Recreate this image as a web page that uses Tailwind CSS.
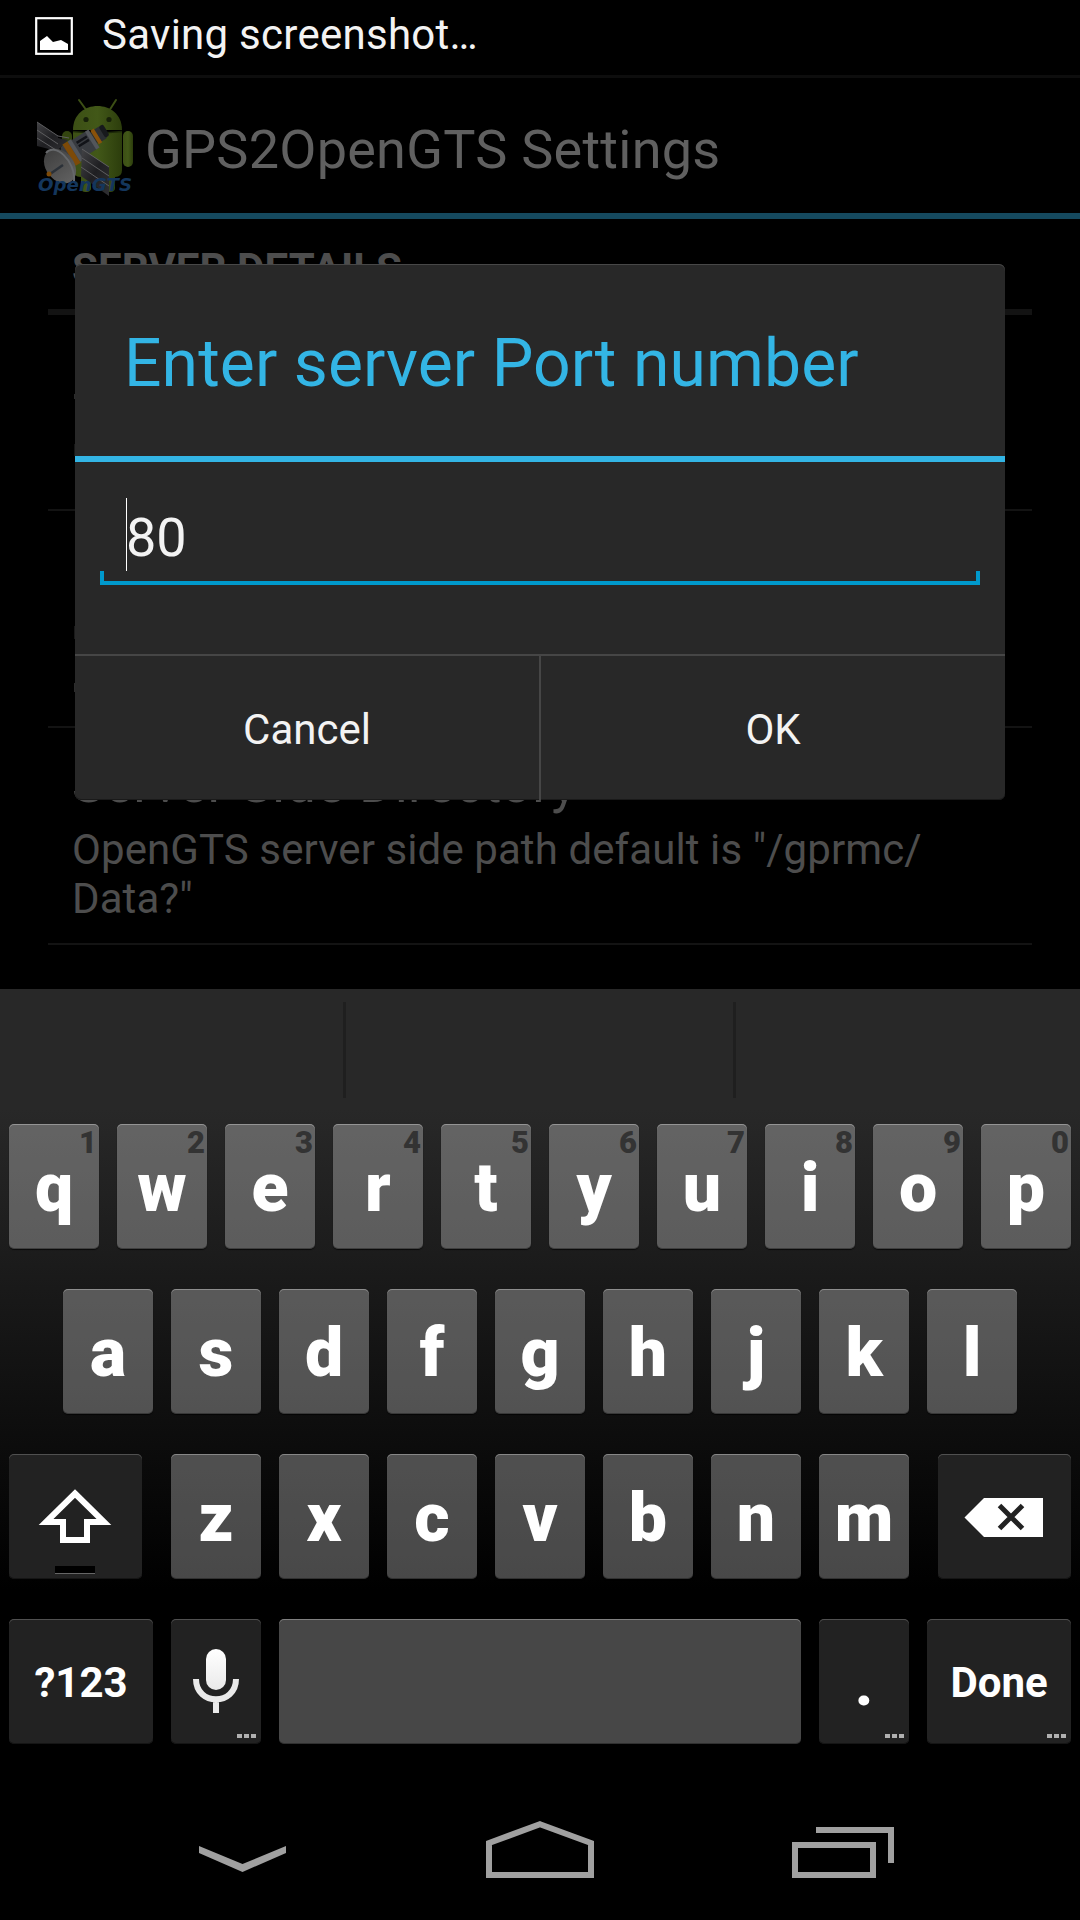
<!DOCTYPE html>
<html lang="en">
<head>
<meta charset="utf-8">
<title>GPS2OpenGTS Settings</title>
<script src="https://cdn.jsdelivr.net/npm/@tailwindcss/browser@4"></script>
</head>
<body class="bg-black">
<div class="relative flex h-[1920px] w-[1080px] flex-col overflow-hidden bg-black font-['Roboto',sans-serif] text-[42px] leading-[49px]">

  <!-- status bar -->
  <header class="flex h-[75px] shrink-0 items-start pl-[35px] text-[#f3f3f3]">
    <svg class="mt-[17px] h-[38px] w-[38px]" viewBox="0 0 38 38"><rect x="1.2" y="1.2" width="35.6" height="35.6" fill="none" stroke="#fff" stroke-width="2.2"/><path d="M5 33V24L12 19L18 25L26 23L33 27V33Z" fill="#fff"/></svg>
    <span class="ml-[29px] mt-[10px] whitespace-nowrap tracking-[0.27px]">Saving screenshot…</span>
  </header>

  <!-- action bar -->
  <div class="flex h-[144px] shrink-0 items-start border-t-[3px] border-b-[6px] border-t-[#0d0d0d] border-b-[#15495e] pl-[36px]">
    <svg class="mt-[20px] h-[98px] w-[98px] shrink-0" viewBox="0 0 98 98">
      <defs>
        <linearGradient id="g" x1="0" x2="1"><stop offset="0" stop-color="#3c4f15"/><stop offset=".5" stop-color="#425818"/><stop offset="1" stop-color="#2c3d0c"/></linearGradient>
        <linearGradient id="d" x1="0" x2="1"><stop offset="0" stop-color="#404040"/><stop offset="1" stop-color="#606060"/></linearGradient>
        <linearGradient id="p" x1="0" x2="1" y2="1"><stop offset="0" stop-color="#434346"/><stop offset=".5" stop-color="#1f1f22"/><stop offset="1" stop-color="#303033"/></linearGradient>
      </defs>
      <path d="M43 2L51 13M80 2L73 13" stroke="#3c4f15" stroke-width="2" stroke-linecap="round"/>
      <path d="M37 32C37 0 86 0 86 32Z" fill="url(#g)"/>
      <path d="M37 34H86V72Q86 79 79 79V90Q79 94 74 94T69 90V79H55V90Q55 94 50 94T45 90V79Q37 79 37 72Z" fill="url(#g)"/>
      <path d="M37 33.500Q61 36 86 33.500" fill="none" stroke="#1d2a08" stroke-width="1.500"/>
      <rect x="87" y="33" width="10" height="36" rx="5" fill="url(#g)"/><rect x="26" y="33" width="10" height="30" rx="5" fill="#33450f"/>
      <circle cx="50" cy="21.500" r="2.600" fill="#172109"/><circle cx="73" cy="21.500" r="2.600" fill="#172109"/>
      <path d="M1 24L22 38V40L32 42L21 53L1 48Z" fill="url(#p)"/>
      <path d="M1 32L22 46M1 40L20 52M1 24L22 38L33 40" stroke="#5e5e60" stroke-width="1" fill="none"/>
      <g transform="rotate(-32 45 48)"><rect x="26" y="38" width="34" height="21" rx="3" fill="#383b40"/><rect x="60" y="41" width="12" height="14" rx="2" fill="#2b2e32"/><rect x="30" y="37" width="6" height="25" fill="#7d4a08"/><rect x="36" y="37" width="4" height="24" fill="#53565b"/><rect x="56" y="38" width="4" height="21" fill="#53565b"/><rect x="61" y="40" width="4" height="16" fill="#8a520a"/><rect x="70" y="41" width="5" height="13" rx="2" fill="#17191c"/><path d="M43 43H55M43 47H55" stroke="#111318" stroke-width="2.500"/></g>
      <path d="M46 51L73 69V98L45 78Z" fill="url(#p)"/>
      <path d="M46 51L73 69M46 60L73 78M45 69L73 88" stroke="#5e5e60" stroke-width="1"/>
      <ellipse cx="24" cy="68" rx="19" ry="14" transform="rotate(52 24 68)" fill="url(#d)"/>
      <path d="M10 55C18 44 40 62 38 84" fill="none" stroke="#66686b" stroke-width="2"/>
      <path d="M14 76L27 67" stroke="#2b3138" stroke-width="2.500"/><circle cx="13" cy="76" r="2.500" fill="#7d4a08"/>
      <text x="2" y="93" font-family="DejaVu Sans" font-weight="bold" font-style="italic" font-size="18.500" fill="#14365c" textLength="94" lengthAdjust="spacingAndGlyphs">OpenGTS</text>
    </svg>
    <h1 class="ml-[11px] mt-[40px] whitespace-nowrap text-[54px] leading-[64px] tracking-[0.25px] text-[#606060]">GPS2OpenGTS Settings</h1>
  </div>

  <!-- settings list, dimmed behind the dialog; slivers of hidden rows peek out at its left edge -->
  <main class="flex h-[770px] shrink-0 flex-col px-[48px] text-[#4d4d4d] [&>section]:border-b-2 [&>section]:border-[#131313] [&>section]:px-[24px] [&_i]:ml-[2px] [&_i]:block [&_i]:w-px [&_i]:bg-[#2c2c2c]">
    <h2 class="h-[96px] border-b-[6px] border-[#131313] pl-[24px] pt-[25px] font-bold tracking-[0.1px]">SERVER DETAILS</h2>
    <section class="h-[196px] pt-[79px]"><i class="h-[5px]"></i><i class="mt-[45px] h-[12px] opacity-50"></i></section>
    <section class="h-[217px] pt-[115px]"><i class="h-[13px] opacity-60"></i><i class="mt-[44px] h-[9px]"></i></section>
    <section class="h-[217px] pt-[24px]"><h3 class="text-[54px] leading-[64px] tracking-[0.3px]">Server Side Directory</h3><p class="mt-[9px] whitespace-nowrap tracking-[0.09px]">OpenGTS server side path default is "/gprmc/<br>Data?"</p></section>
  </main>

  <!-- dialog -->
  <div class="absolute left-[75px] top-[264px] flex h-[536px] w-[930px] flex-col overflow-hidden rounded-[6px] bg-[#282828] text-[#f3f3f3] shadow-[inset_0_1px_0_#484848,inset_0_-1px_0_#1a1a1a]">
    <div class="h-[198px] whitespace-nowrap border-b-[6px] border-[#33b5e5] pl-[49px] pt-[61px] text-[66px] leading-[78px] tracking-[0.09px] text-[#33b5e5]">Enter server Port number</div>
    <div class="h-[192px] px-[25px] pt-[36px]">
      <div class="flex h-[73px] pl-[26px]"><i class="w-px bg-white"></i><span class="-ml-px mt-[8px] text-[54px] leading-[64px]">80</span></div>
      <div class="h-[14px] border-x-4 border-b-4 border-[#0099cc]"></div>
    </div>
    <div class="flex h-[146px] border-t-2 border-[#464646] text-center">
      <div class="w-[466px] border-r-2 border-[#464646] pt-[49px]">Cancel</div>
      <div class="grow pt-[49px]">OK</div>
    </div>
  </div>

  <!-- keyboard -->
  <div class="flex h-[120px] shrink-0 items-start gap-[387px] bg-[#282828] pt-[13px] pl-[343px]">
    <i class="h-[96px] w-[3px] bg-[#1f1f1f]"></i><i class="h-[96px] w-[3px] bg-[#1f1f1f]"></i>
  </div>
  <div class="flex h-[661px] shrink-0 flex-col gap-[40px] bg-linear-to-b/srgb from-[#282828] to-black to-[481px] pt-[15px] font-bold text-white
    [&>div]:flex [&>div]:h-[125px] [&>div]:justify-center [&>div]:gap-[18px]
    [&_b]:relative [&_b]:w-[90px] [&_b]:rounded-[5px] [&_b]:bg-white/28 [&_b]:pt-[23px] [&_b]:text-center [&_b]:text-[68px] [&_b]:leading-[82px] [&_b]:shadow-[inset_0_1px_0_#ffffff50,inset_0_-1px_0_#00000050,0_1px_1px_#000000b0]
    [&_s]:absolute [&_s]:right-[2px] [&_s]:top-px [&_s]:text-[31px] [&_s]:leading-[36px] [&_s]:text-[#333] [&_s]:no-underline
    [&_u]:relative [&_u]:rounded-[5px] [&_u]:bg-[#222] [&_u]:text-center [&_u]:no-underline [&_u]:shadow-[inset_0_1px_0_#505050,inset_0_-1px_0_#151515]">
    <div><b>q<s>1</s></b><b>w<s>2</s></b><b>e<s>3</s></b><b>r<s>4</s></b><b>t<s>5</s></b><b>y<s>6</s></b><b>u<s>7</s></b><b>i<s>8</s></b><b>o<s>9</s></b><b>p<s>0</s></b></div>
    <div><b>a</b><b>s</b><b>d</b><b>f</b><b>g</b><b>h</b><b>j</b><b>k</b><b>l</b></div>
    <div>
      <u class="mr-[11px] w-[133px]"><svg class="h-[125px] w-[133px]" viewBox="9 1454 133 125"><path d="M75 1493.500L104 1522H87V1540H63V1522H46Z" fill="none" stroke="#fff" stroke-width="6"/><path d="M55 1566H95V1573H55Z"/><path d="M55 1573H95V1574H55Z" fill="#666"/></svg></u>
      <b>z</b><b>x</b><b>c</b><b>v</b><b>b</b><b>n</b><b>m</b>
      <u class="ml-[11px] w-[133px]"><svg class="h-[125px] w-[133px]" viewBox="938 1454 133 125"><path d="M964.500 1517.500L984 1498H1043V1537H984Z" fill="#fff"/><path d="M999.500 1505.500L1022.500 1528.500M1022.500 1505.500L999.500 1528.500" stroke="#222" stroke-width="5"/></svg></u>
    </div>
    <div>
      <u class="w-[144px] pt-[39px]">?123</u>
      <u class="w-[90px]"><svg class="h-[125px] w-[90px]" viewBox="171 1619 90 125"><defs><linearGradient id="m" x2="0" y2="1"><stop stop-color="#fff"/><stop offset="1" stop-color="#eaeaea"/></linearGradient></defs><rect x="206" y="1649" width="20" height="41" rx="10" fill="url(#m)"/><path d="M196 1679C196 1706 236 1706 236 1679M216 1699V1713" fill="none" stroke="#eaeaea" stroke-width="6"/><path d="M237 1734h5v4h-5zM244 1734h5v4h-5zM251 1734h5v4h-5z" fill="#b0b0b0"/></svg></u>
      <b class="!w-[522px]"></b>
      <u class="w-[90px] pt-[22px] text-[68px] leading-[82px]">.<svg class="absolute right-[5px] bottom-[6px] h-[4px] w-[19px]" viewBox="0 0 19 4"><path d="M0 0h5v4h-5zM7 0h5v4h-5zM14 0h5v4h-5z" fill="#b0b0b0"/></svg></u>
      <u class="w-[144px] pt-[39px]">Done<svg class="absolute right-[5px] bottom-[6px] h-[4px] w-[19px]" viewBox="0 0 19 4"><path d="M0 0h5v4h-5zM7 0h5v4h-5zM14 0h5v4h-5z" fill="#b0b0b0"/></svg></u>
    </div>
  </div>

  <!-- navigation bar -->
  <nav class="h-[150px] shrink-0 bg-black">
    <svg class="h-[150px] w-[1080px]" viewBox="0 1770 1080 150"><path d="M199 1846L242.500 1864L286 1846V1853L242.500 1872L199 1853Z" fill="#a0a0a0"/><path d="M540 1824.300L591 1843V1875H489V1843ZM795 1845H873V1875H795ZM816 1830H891V1863" fill="none" stroke="#a0a0a0" stroke-width="6"/></svg>
  </nav>
</div>
</body>
</html>
